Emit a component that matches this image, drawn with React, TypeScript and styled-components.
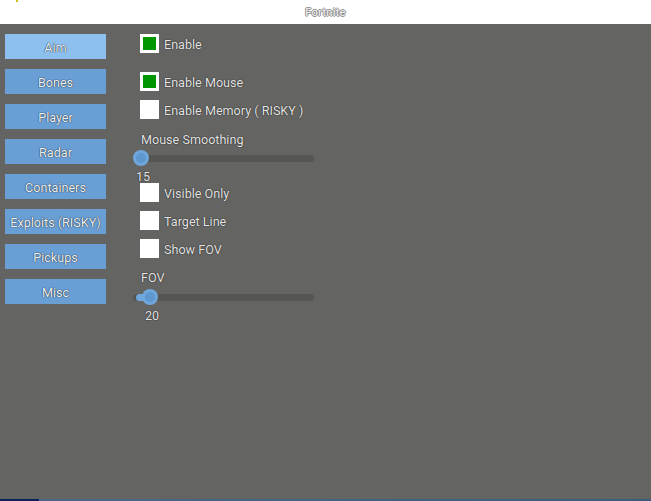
import { FC } from "react";
import styled, { createGlobalStyle } from "styled-components";

const GlobalStyle = createGlobalStyle`
  html, body {
    margin: 0;
    padding: 0;
    height: 100%;
    overflow: hidden;
  }
  #root {
    height: 100%;
  }
`;

const Window = styled.div`
  height: 100vh;
  display: flex;
  flex-direction: column;
  background: #646462;
  font-family: Roboto, "Liberation Sans", sans-serif;
`;

const TitleBar = styled.div`
  height: 24px;
  flex-shrink: 0;
  background: #ffffff;
  display: flex;
  align-items: center;
  justify-content: center;
  position: relative;
`;

const Title = styled.span`
  font-size: 11px;
  color: #f4f4f4;
  letter-spacing: 0.3px;
  text-shadow: -1px 0 0 #8a8a8a, 1px 0 0 #8a8a8a, 0 -1px 0 #8a8a8a,
    0 1px 0 #8a8a8a;
  margin-top: 1px;
`;

const Marker = styled.span`
  position: absolute;
  left: 16px;
  top: 0;
  width: 2px;
  height: 2px;
  background: #c8c000;
`;

const Body = styled.div`
  flex: 1;
  display: flex;
  padding: 10px 0 0 5px;
  gap: 27px;
`;

const Sidebar = styled.nav`
  display: flex;
  flex-direction: column;
  gap: 10px;
`;

const Tab = styled.button<{ $active?: boolean }>`
  width: 101px;
  height: 25px;
  border: none;
  padding: 2px 0 0;
  background: ${(p) => (p.$active ? "#8dc0ee" : "#6a9fd6")};
  color: #eef2f6;
  font-family: Roboto, "Liberation Sans", sans-serif;
  font-size: 12.6px;
  white-space: nowrap;
  text-shadow: 0 0 1px #1c2a3a, 0 0 1px #1c2a3a;
  cursor: pointer;
`;

const Content = styled.div`
  width: 181px;
  display: flex;
  flex-direction: column;
`;

const CheckRow = styled.label<{ $top: number }>`
  display: flex;
  align-items: center;
  gap: 5px;
  height: 19px;
  margin: ${(p) => p.$top}px 0 0 7px;
  cursor: pointer;
`;

const Box = styled.span<{ $checked?: boolean }>`
  width: 19px;
  height: 19px;
  box-sizing: border-box;
  background: #ffffff;
  display: flex;
  align-items: center;
  justify-content: center;

  &::after {
    content: "";
    width: 13px;
    height: 13px;
    background: #009600;
    display: ${(p) => (p.$checked ? "block" : "none")};
  }
`;

const Label = styled.span`
  font-size: 12.6px;
  line-height: 14px;
  padding-top: 2px;
  color: #e4e4e4;
  text-shadow: 0 0 1px #222, 0 0 1px #222;
  white-space: nowrap;
`;

const FieldLabel = styled(Label)<{ $top: number }>`
  display: block;
  margin: ${(p) => p.$top}px 0 0 8px;
  padding-top: 0;
`;

const SliderWrap = styled.div<{ $top: number }>`
  position: relative;
  height: 16px;
  margin-top: ${(p) => p.$top}px;
`;

const Track = styled.div`
  position: absolute;
  left: 0;
  right: 0;
  top: 5px;
  height: 7px;
  border-radius: 3.5px;
  background: #555553;
`;

const Fill = styled.div`
  position: absolute;
  left: 3px;
  top: 5px;
  height: 7px;
  border-radius: 3.5px 0 0 3.5px;
  background: #6fa6dc;
`;

const Thumb = styled.div`
  position: absolute;
  top: 0;
  width: 16px;
  height: 16px;
  margin-left: -8px;
  border-radius: 50%;
  background: #6fa6dc;
  display: flex;
  align-items: center;
  justify-content: center;

  &::after {
    content: "";
    width: 10px;
    height: 10px;
    border-radius: 50%;
    background: #5f97d0;
  }
`;

const Value = styled(Label)`
  display: block;
  margin-top: 2px;
  width: 30px;
  text-align: center;
`;

interface SliderProps {
  top: number;
  pos: number;
  value: number;
}

const Slider: FC<SliderProps> = ({ top, pos, value }) => (
  <>
    <SliderWrap $top={top}>
      <Track />
      <Fill style={{ width: Math.max(pos - 3, 0) }} />
      <Thumb style={{ left: pos }} />
    </SliderWrap>
    <Value style={{ marginLeft: pos - 13 }}>{value}</Value>
  </>
);

const tabs = [
  "Aim",
  "Bones",
  "Player",
  "Radar",
  "Containers",
  "Exploits (RISKY)",
  "Pickups",
  "Misc",
];

const Footer = styled.div`
  height: 2px;
  flex-shrink: 0;
  display: flex;
`;

const FooterStart = styled.div`
  width: 39px;
  background: #0e1f5c;
`;

const FooterRest = styled.div`
  flex: 1;
  background: linear-gradient(90deg, #4c6788, #3f5b7c);
`;

export default function App() {
  return (
    <>
      <GlobalStyle />
      <Window>
        <TitleBar>
          <Marker />
          <Title>Fortnite</Title>
        </TitleBar>
        <Body>
          <Sidebar>
            {tabs.map((t, i) => (
              <Tab key={t} $active={i === 0}>
                {t}
              </Tab>
            ))}
          </Sidebar>
          <Content>
            <CheckRow $top={0}>
              <Box $checked />
              <Label>Enable</Label>
            </CheckRow>
            <CheckRow $top={19}>
              <Box $checked />
              <Label>Enable Mouse</Label>
            </CheckRow>
            <CheckRow $top={9}>
              <Box />
              <Label>Enable Memory ( RISKY )</Label>
            </CheckRow>
            <FieldLabel $top={14}>Mouse Smoothing</FieldLabel>
            <Slider top={3} pos={8} value={15} />
            <CheckRow $top={-1}>
              <Box />
              <Label>Visible Only</Label>
            </CheckRow>
            <CheckRow $top={9}>
              <Box />
              <Label>Target Line</Label>
            </CheckRow>
            <CheckRow $top={9}>
              <Box />
              <Label>Show FOV</Label>
            </CheckRow>
            <FieldLabel $top={13}>FOV</FieldLabel>
            <Slider top={4} pos={17} value={20} />
          </Content>
        </Body>
        <Footer>
          <FooterStart />
          <FooterRest />
        </Footer>
      </Window>
    </>
  );
}
